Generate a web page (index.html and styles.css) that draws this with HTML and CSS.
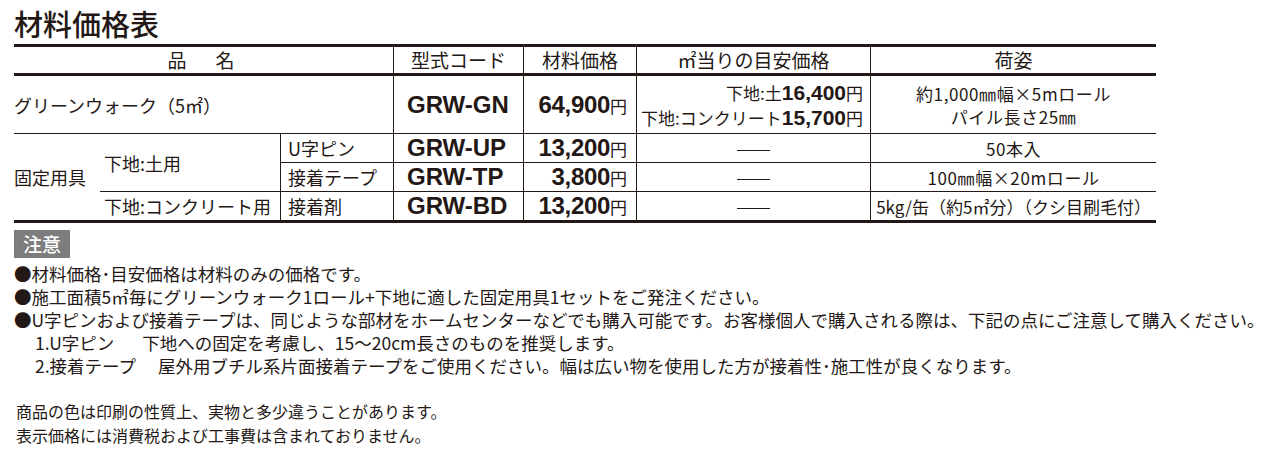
FILE: index.html
```html
<!DOCTYPE html>
<html lang="ja">
<head>
<meta charset="utf-8">
<title>材料価格表</title>
<link rel="stylesheet" href="styles.css">
</head>
<body>
<h1 class="title">材料価格表</h1>
<table class="price">
  <colgroup>
    <col class="c-grp"><col class="c-sub"><col class="c-item"><col class="c-code"><col class="c-amt"><col class="c-est"><col class="c-pack">
  </colgroup>
  <thead>
    <tr class="hd">
      <th colspan="3" class="bd-r"><span class="hname">品　名</span></th>
      <th class="bd-r">型式コード</th>
      <th class="bd-r">材料価格</th>
      <th class="bd-r">㎡当りの目安価格</th>
      <th>荷姿</th>
    </tr>
  </thead>
  <tbody>
    <tr class="r1">
      <td colspan="3" class="name bd-r bd-b">グリーンウォーク（5㎡）</td>
      <td class="code bd-r bd-b">GRW-GN</td>
      <td class="amt bd-r bd-b"><span class="num">64,900</span><span class="yen">円</span></td>
      <td class="est bd-r bd-b">
        <div>下地:土<span class="num2">16,400</span>円</div>
        <div>下地:コンクリート<span class="num2">15,700</span>円</div>
      </td>
      <td class="pack pack2 bd-b"><div>約1,000㎜幅×5mロール</div><div>パイル長さ25㎜</div></td>
    </tr>
    <tr class="r2">
      <td rowspan="3" class="name grp">固定用具</td>
      <td rowspan="2" class="name sub bd-r bd-b">下地:土用</td>
      <td class="name item bd-r bd-b">U字ピン</td>
      <td class="code bd-r bd-b">GRW-UP</td>
      <td class="amt bd-r bd-b"><span class="num">13,200</span><span class="yen">円</span></td>
      <td class="est-c bd-r bd-b"><span class="dash"></span></td>
      <td class="pack bd-b">50本入</td>
    </tr>
    <tr class="r3">
      <td class="name item bd-r bd-b">接着テープ</td>
      <td class="code bd-r bd-b">GRW-TP</td>
      <td class="amt bd-r bd-b"><span class="num">3,800</span><span class="yen">円</span></td>
      <td class="est-c bd-r bd-b"><span class="dash"></span></td>
      <td class="pack bd-b">100㎜幅×20mロール</td>
    </tr>
    <tr class="r4">
      <td class="name sub bd-r">下地:コンクリート用</td>
      <td class="name item bd-r">接着剤</td>
      <td class="code bd-r">GRW-BD</td>
      <td class="amt bd-r"><span class="num">13,200</span><span class="yen">円</span></td>
      <td class="est-c bd-r"><span class="dash"></span></td>
      <td class="pack pack-tight">5kg/缶（約5㎡分）（クシ目刷毛付）</td>
    </tr>
  </tbody>
</table>

<div class="notice">
  <div class="badge">注意</div>
  <div class="notes">
    <p>●材料価格･目安価格は材料のみの価格です。</p>
    <p>●施工面積5㎡毎にグリーンウォーク1ロール+下地に適した固定用具1セットをご発注ください。</p>
    <p>●U字ピンおよび接着テープは、同じような部材をホームセンターなどでも購入可能です。お客様個人で購入される際は、下記の点にご注意して購入ください。</p>
    <p class="ind"><span class="lbl1">1.U字ピン</span>下地への固定を考慮し、15～20cm長さのものを推奨します。</p>
    <p class="ind"><span class="lbl2">2.接着テープ</span>屋外用ブチル系片面接着テープをご使用ください。幅は広い物を使用した方が接着性･施工性が良くなります。</p>
  </div>
  <div class="foot">
    <p>商品の色は印刷の性質上、実物と多少違うことがあります。</p>
    <p>表示価格には消費税および工事費は含まれておりません。</p>
  </div>
</div>
</body>
</html>
```

FILE: styles.css
```css
html, body {
  margin: 0;
  background: #ffffff;
}
body {
  padding: 0 0 0 14px;
  font-family: "Noto Sans CJK JP", "Noto Sans", sans-serif;
  color: #231815;
}
p { margin: 0; }

.title {
  margin: 0 0 6px 0;
  padding-top: 9px;
  font-size: 29px;
  line-height: 29px;
  font-weight: 500;
}

.price {
  border-collapse: separate;
  border-spacing: 0;
  table-layout: fixed;
  width: 1142px;
  border-top: 3px solid #231815;
  border-bottom: 3px solid #231815;
}
.c-grp { width: 86px; }
.c-sub { width: 181px; }
.c-item { width: 113px; }
.c-code { width: 130px; }
.c-amt { width: 113px; }
.c-est { width: 234px; }
.c-pack { width: 285px; }

.price th, .price td {
  padding: 0;
  white-space: nowrap;
  font-weight: normal;
}
.price .bd-r { border-right: 1px solid #231815; }
.price .bd-b { border-bottom: 1px solid #231815; }

.hd { height: 29px; }
.price .hd th {
  border-bottom: 3px solid #231815;
  font-size: 19px;
  line-height: 20px;
  text-align: center;
}
.hname { letter-spacing: 5px; }

.r1 { height: 58px; }
.r2 { height: 29px; }
.r3 { height: 29px; }
.r4 { height: 27px; }

.price .name {
  font-size: 18px;
  line-height: 20px;
  text-align: left;
}
.price .sub { padding-left: 4px; }
.price .item { padding-left: 7px; }

.price .code {
  font-family: "Liberation Sans", Arial, sans-serif;
  font-weight: bold;
  font-size: 24px;
  line-height: 24px;
  padding-left: 13px;
  text-align: left;
}

.price .amt {
  text-align: right;
  padding-right: 9px;
  font-size: 17px;
}
.num {
  font-family: "Liberation Sans", Arial, sans-serif;
  font-weight: bold;
  font-size: 24px;
  letter-spacing: -0.3px;
}
.yen { font-size: 17px; }

.price .est {
  text-align: right;
  padding-right: 7px;
  font-size: 17px;
  line-height: 25px;
}
.num2 {
  font-family: "Liberation Sans", Arial, sans-serif;
  font-weight: bold;
  font-size: 21px;
}
.price .est-c { text-align: center; }
.dash {
  display: inline-block;
  width: 33px;
  height: 1px;
  background: #231815;
  vertical-align: middle;
}

.price .pack {
  text-align: center;
  font-size: 17px;
  line-height: 21px;
  letter-spacing: 0.6px;
}
.price .pack2 { line-height: 23px; }
.price .pack-tight { letter-spacing: 0; }

.notice { margin-top: 7px; }
.badge {
  width: 56px;
  height: 28px;
  background: #7d7d7d;
  color: #ffffff;
  font-size: 19px;
  line-height: 28px;
  font-weight: 500;
  text-align: center;
}
.notes {
  margin-top: 4px;
  font-size: 17.5px;
  line-height: 23px;
  white-space: nowrap;
}
.ind { padding-left: 21px; }
.lbl1 { display: inline-block; margin-right: 28px; }
.lbl2 { display: inline-block; margin-right: 22px; }

.foot {
  margin-top: 22px;
  padding-left: 2px;
  font-size: 16px;
  line-height: 24px;
}
```
